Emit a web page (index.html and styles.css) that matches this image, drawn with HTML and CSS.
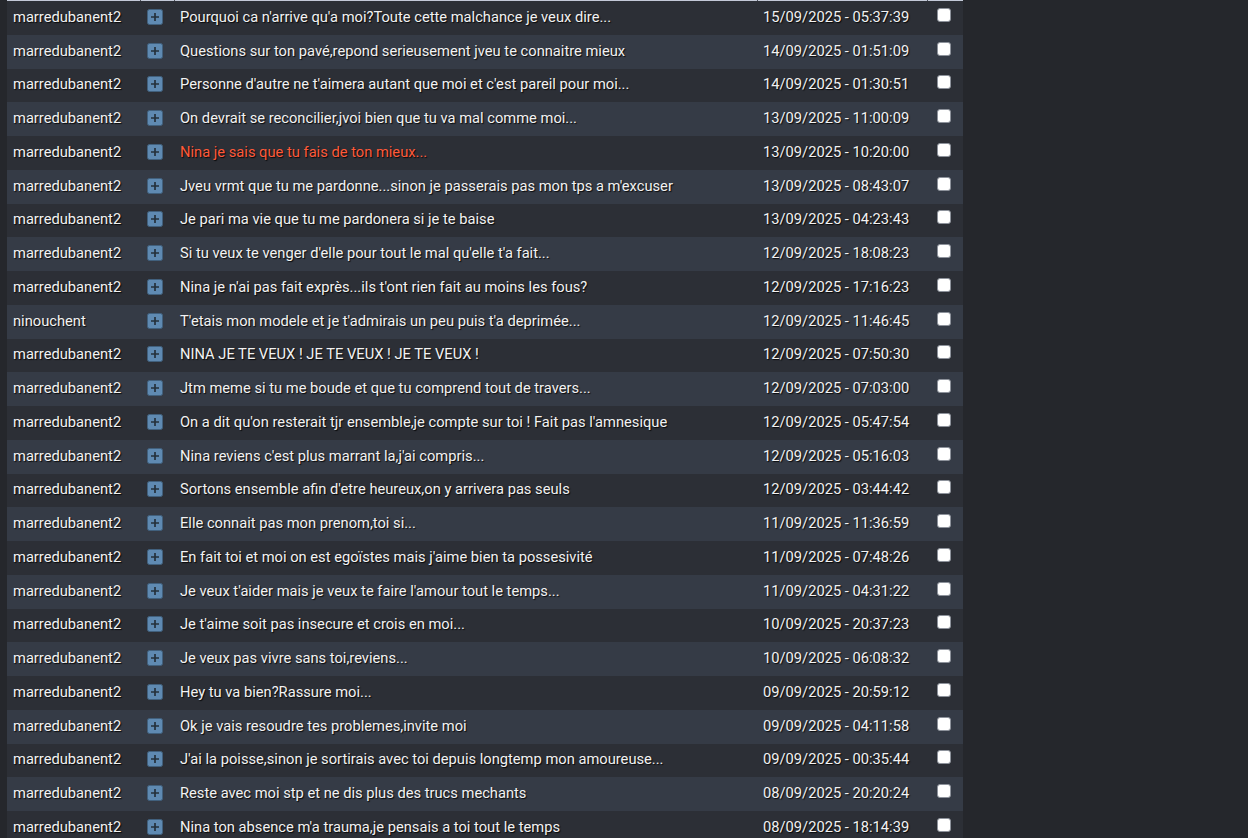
FILE: index.html
```html
<!DOCTYPE html>
<html lang="fr">
<head>
    <meta charset="UTF-8">
    <meta name="viewport" content="width=device-width, initial-scale=1.0">
    <title>Messages</title>
    <link rel="stylesheet" href="styles.css">
</head>
<body>
    <div class="container">
        <table class="messages-table">
            <colgroup>
                <col class="col-auteur">
                <col class="col-voir">
                <col class="col-message">
                <col class="col-date">
                <col class="col-check">
            </colgroup>
            <thead>
                <tr>
                    <th></th>
                    <th></th>
                    <th></th>
                    <th></th>
                    <th></th>
                </tr>
            </thead>
            <tbody id="messagesBody"></tbody>
        </table>
    </div>

    <script>
        const messages = [
            ['marredubanent2', "Pourquoi ca n'arrive qu'a moi?Toute cette malchance je veux dire...", '15/09/2025 - 05:37:39'],
            ['marredubanent2', "Questions sur ton pavé,repond serieusement jveu te connaitre mieux", '14/09/2025 - 01:51:09'],
            ['marredubanent2', "Personne d'autre ne t'aimera autant que moi et c'est pareil pour moi...", '14/09/2025 - 01:30:51'],
            ['marredubanent2', "On devrait se reconcilier,jvoi bien que tu va mal comme moi...", '13/09/2025 - 11:00:09'],
            ['marredubanent2', "Nina je sais que tu fais de ton mieux...", '13/09/2025 - 10:20:00', true],
            ['marredubanent2', "Jveu vrmt que tu me pardonne...sinon je passerais pas mon tps a m'excuser", '13/09/2025 - 08:43:07'],
            ['marredubanent2', "Je pari ma vie que tu me pardonera si je te baise", '13/09/2025 - 04:23:43'],
            ['marredubanent2', "Si tu veux te venger d'elle pour tout le mal qu'elle t'a fait...", '12/09/2025 - 18:08:23'],
            ['marredubanent2', "Nina je n'ai pas fait exprès...ils t'ont rien fait au moins les fous?", '12/09/2025 - 17:16:23'],
            ['ninouchent', "T'etais mon modele et je t'admirais un peu puis t'a deprimée...", '12/09/2025 - 11:46:45'],
            ['marredubanent2', "NINA JE TE VEUX ! JE TE VEUX ! JE TE VEUX !", '12/09/2025 - 07:50:30'],
            ['marredubanent2', "Jtm meme si tu me boude et que tu comprend tout de travers...", '12/09/2025 - 07:03:00'],
            ['marredubanent2', "On a dit qu'on resterait tjr ensemble,je compte sur toi ! Fait pas l'amnesique", '12/09/2025 - 05:47:54'],
            ['marredubanent2', "Nina reviens c'est plus marrant la,j'ai compris...", '12/09/2025 - 05:16:03'],
            ['marredubanent2', "Sortons ensemble afin d'etre heureux,on y arrivera pas seuls", '12/09/2025 - 03:44:42'],
            ['marredubanent2', "Elle connait pas mon prenom,toi si...", '11/09/2025 - 11:36:59'],
            ['marredubanent2', "En fait toi et moi on est egoïstes mais j'aime bien ta possesivité", '11/09/2025 - 07:48:26'],
            ['marredubanent2', "Je veux t'aider mais je veux te faire l'amour tout le temps...", '11/09/2025 - 04:31:22'],
            ['marredubanent2', "Je t'aime soit pas insecure et crois en moi...", '10/09/2025 - 20:37:23'],
            ['marredubanent2', "Je veux pas vivre sans toi,reviens...", '10/09/2025 - 06:08:32'],
            ['marredubanent2', "Hey tu va bien?Rassure moi...", '09/09/2025 - 20:59:12'],
            ['marredubanent2', "Ok je vais resoudre tes problemes,invite moi", '09/09/2025 - 04:11:58'],
            ['marredubanent2', "J'ai la poisse,sinon je sortirais avec toi depuis longtemp mon amoureuse...", '09/09/2025 - 00:35:44'],
            ['marredubanent2', "Reste avec moi stp et ne dis plus des trucs mechants", '08/09/2025 - 20:20:24'],
            ['marredubanent2', "Nina ton absence m'a trauma,je pensais a toi tout le temps", '08/09/2025 - 18:14:39']
        ];

        const plusIcon = `
            <svg class="voir-icon" width="16" height="16" viewBox="0 0 16 16">
                <rect x="0.5" y="0.5" width="15" height="15" rx="2" fill="#5f8ab2" stroke="#41607d"/>
                <path d="M8 4v8M4 8h8" stroke="#25303b" stroke-width="1.7"/>
            </svg>`;

        // Afficher les messages
        function displayMessages() {
            const tbody = document.getElementById('messagesBody');
            messages.forEach(([auteur, texte, date, nonLu]) => {
                const row = document.createElement('tr');
                row.innerHTML = `
                    <td class="auteur">${auteur}</td>
                    <td class="voir">${plusIcon}</td>
                    <td class="message ${nonLu ? 'non-lu' : ''}">${texte}</td>
                    <td class="date">${date}</td>
                    <td class="check"><input type="checkbox"></td>
                `;
                tbody.appendChild(row);
            });
        }

        document.addEventListener('DOMContentLoaded', displayMessages);
    </script>
</body>
</html>
```

FILE: styles.css
```css
* {
    margin: 0;
    padding: 0;
    box-sizing: border-box;
}

body {
    background-color: #25272c;
    font-family: Roboto, "Noto Sans", Arial, sans-serif;
    font-size: 14.7px;
    padding: 0 7px;
    overflow: hidden;
}

.container {
    width: 956px;
}

.messages-table {
    width: 956px;
    border-collapse: collapse;
    table-layout: fixed;
}

.col-auteur { width: 133px; }
.col-voir { width: 34px; }
.col-message { width: 583px; }
.col-date { width: 170px; }
.col-check { width: 36px; }

.messages-table th {
    height: 1px;
    background-color: #c3c9d8;
    border-left: 1px solid #4b4f58;
}

.messages-table th:first-child {
    border-left: none;
}

.messages-table tbody tr {
    height: 33.75px;
    background-color: #2c2f36;
}

.messages-table tbody tr:nth-child(even) {
    background-color: #353b46;
}

.messages-table td {
    padding: 0 6px 2px;
    vertical-align: middle;
    white-space: nowrap;
    color: #f2f2f2;
    text-shadow: 1px 1px 1px rgba(0, 0, 0, 0.85);
}

.auteur {
    padding-left: 5px;
    color: #ececec;
}

.voir-icon {
    display: block;
    margin-left: 1px;
}

.message {
    padding-left: 7px;
}

.message.non-lu {
    color: #ff5a3a;
}

.date {
    padding-left: 7px;
    color: #b4b9c2;
}

.check {
    text-align: center;
}

.check input {
    appearance: none;
    display: block;
    width: 14px;
    height: 14px;
    margin: 0 0 4px 4px;
    background-color: #fff;
    border: 1px solid #8d929b;
    border-radius: 3px;
}
```
